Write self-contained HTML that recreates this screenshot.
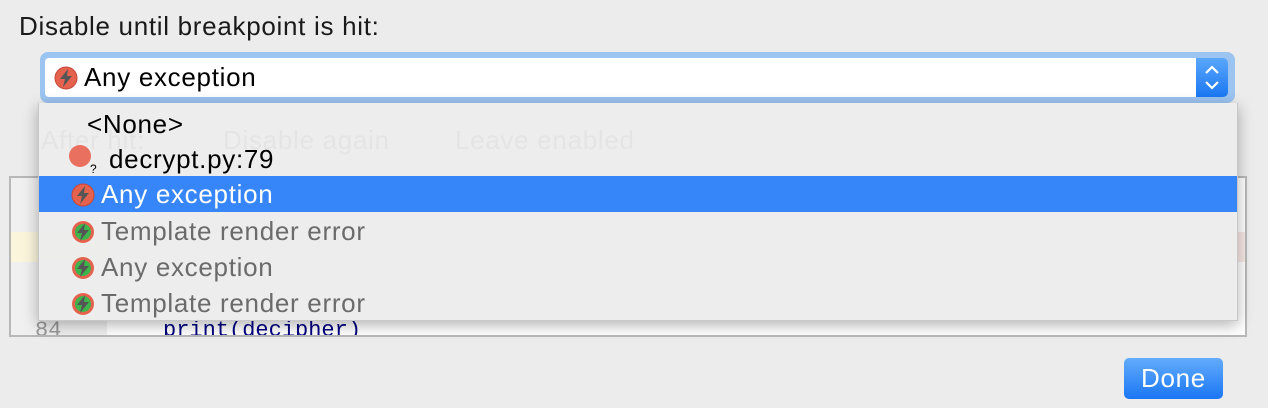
<!DOCTYPE html>
<html><head><style>
body{margin:0;width:1268px;height:408px;background:#ececec;font-family:"Liberation Sans",sans-serif;position:relative;overflow:hidden;letter-spacing:0.7px}
.a{position:absolute}
.lbl{left:19px;top:11px;font-size:26px;color:#1a1a1a}
.ring{left:40px;top:52px;width:1195px;height:51px;border-radius:8px;background:#9cc4f1}
.field{left:45px;top:58px;width:1151px;height:39px;background:#fff;border-radius:4px 0 0 4px}
.btn{left:1196px;top:58px;width:32px;height:39px;background:linear-gradient(#5aa6fb,#1b78f2);border-radius:0 5px 5px 0}
.ed{left:9px;top:176px;width:1234px;height:157px;border:2px solid #b8b8b8;background:#fff;overflow:hidden}
.gut{left:0;top:0;width:96px;height:157px;background:#f0f0f0}
.code{font-family:"Liberation Mono",monospace;font-size:22px;color:#000080;letter-spacing:0}
.menu{left:38px;top:103px;width:1198px;height:217px;background:rgba(236,236,236,0.97);box-shadow:0 4px 14px rgba(0,0,0,.3);border:1px solid #c8c8c8;border-top:none}
.row{position:absolute;left:0;width:1198px;height:36px;font-size:26px;line-height:36px}
.sel{background:#3786f9;color:#fff}
.ic{position:absolute;left:32px;top:7px}
.t{position:absolute;left:62px}
.done{left:1124px;top:358px;width:99px;height:41px;border-radius:5px;background:linear-gradient(#62acfc,#1a76f3);color:#fff;font-size:26px;text-align:center;line-height:41px}
.ghost{color:rgba(0,0,0,0.035);font-size:26px}
</style></head><body>
<div class="a lbl">Disable until breakpoint is hit:</div>
<div class="a ring"></div>
<div class="a field"></div>
<div class="a btn"><svg width="32" height="39"><path d="M10 15 L16 9 L22 15 M10 24 L16 30 L22 24" stroke="#fff" stroke-width="2.2" fill="none"/></svg></div>
<svg class="a" style="left:54px;top:66px" width="24" height="24"><circle cx="12" cy="12" r="11" fill="#e5624f" stroke="#c8463a"/><path d="M14 3 L6 13 L11 13 L9 21 L18 10 L13 10 Z" fill="#555"/></svg>
<div class="a" style="left:84px;top:62px;font-size:26px;color:#000">Any exception</div>
<div class="a ed"><div class="a gut"></div>
<div class="a" style="left:0;top:54px;width:96px;height:30px;background:#fbf5dc"></div>
<div class="a" style="left:96px;top:54px;width:1140px;height:30px;background:#f7e8e4"></div>
<div class="a code" style="left:24px;top:140px;color:#999">84</div>
<div class="a code" style="left:152px;top:140px">print(decipher)</div>
</div>
<div class="a menu">
<div class="ghost a" style="left:2px;top:22px">After hit:</div>
<div class="ghost a" style="left:184px;top:22px">Disable again</div>
<div class="ghost a" style="left:416px;top:22px">Leave enabled</div>
<div class="row" style="top:3px"><span class="t" style="left:48px">&lt;None&gt;</span></div>
<div class="row" style="top:38px"><svg class="ic" width="32" height="30" style="left:30px;top:4px"><circle cx="11" cy="11" r="11" fill="#e9705f"/><text x="21" y="28" font-size="12" font-family="Liberation Sans">?</text></svg><span class="t" style="left:70px">decrypt.py:79</span></div>
<div class="row sel" style="top:73px"><svg class="ic" width="24" height="24"><circle cx="12" cy="12" r="11" fill="#e5624f" stroke="#c8463a"/><path d="M14 3 L6 13 L11 13 L9 21 L18 10 L13 10 Z" fill="#555"/></svg><span class="t">Any exception</span></div>
<div class="row" style="top:110px;color:#6b6b6b"><svg class="ic" width="24" height="24"><circle cx="12" cy="12" r="11" fill="#e5624f"/><circle cx="12" cy="12" r="8" fill="#3db54a"/><path d="M14 3 L6 13 L11 13 L9 21 L18 10 L13 10 Z" fill="#555"/></svg><span class="t">Template render error</span></div>
<div class="row" style="top:146px;color:#6b6b6b"><svg class="ic" width="24" height="24"><circle cx="12" cy="12" r="11" fill="#e5624f"/><circle cx="12" cy="12" r="8" fill="#3db54a"/><path d="M14 3 L6 13 L11 13 L9 21 L18 10 L13 10 Z" fill="#555"/></svg><span class="t">Any exception</span></div>
<div class="row" style="top:182px;color:#6b6b6b"><svg class="ic" width="24" height="24"><circle cx="12" cy="12" r="11" fill="#e5624f"/><circle cx="12" cy="12" r="8" fill="#3db54a"/><path d="M14 3 L6 13 L11 13 L9 21 L18 10 L13 10 Z" fill="#555"/></svg><span class="t">Template render error</span></div>
</div>
<div class="a done">Done</div>
</body></html>
